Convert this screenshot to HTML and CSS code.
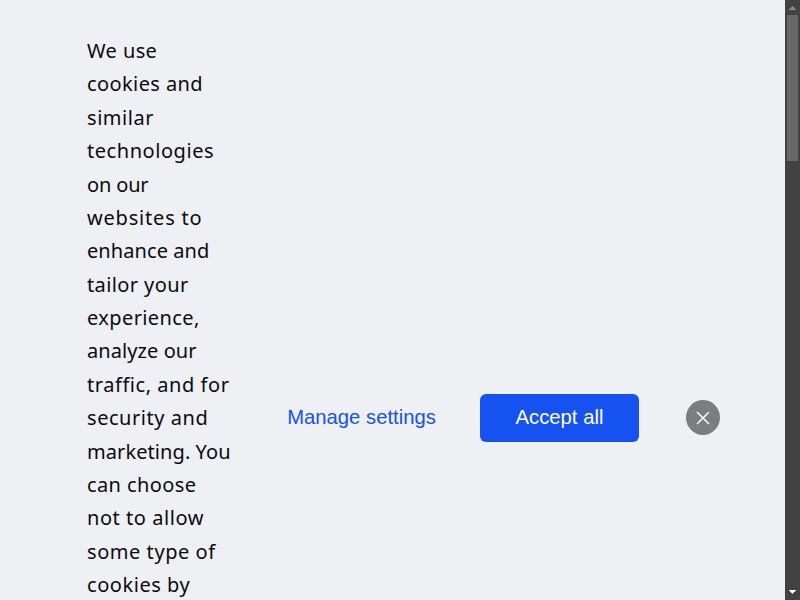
FILE: index.html
```
<!DOCTYPE html>
<html lang="en">
<head>
<meta charset="utf-8">
<title>Cookie settings</title>
<link rel="stylesheet" href="styles.css">
</head>
<body>
<main class="banner">
  <p class="message">
    <span class="loose">We use</span>
    <span class="loose">cookies and</span>
    <span class="wide">similar</span>
    <span class="wide">technologies</span>
    <span class="tight">on our</span>
    <span class="widest">websites to</span>
    <span class="snug">enhance and</span>
    <span class="loose">tailor your</span>
    <span class="loose">experience,</span>
    <span class="snug">analyze our</span>
    <span class="wide">traffic, and for</span>
    <span class="wide">security and</span>
    <span class="snug">marketing. You</span>
    <span class="loose">can choose</span>
    <span class="wide">not to allow</span>
    <span class="wide">some type of</span>
    <span class="wide">cookies by</span>
  </p>
  <div class="actions">
    <button class="manage">Manage settings</button>
    <button class="accept">Accept all</button>
    <button class="close" aria-label="Close"><svg width="14" height="14" viewBox="0 0 14 14"><path d="M1 1L13 13M13 1L1 13"/></svg></button>
  </div>
</main>
<div class="scrollbar">
  <svg class="arrow" width="15" height="15" viewBox="0 0 15 15" shape-rendering="crispEdges"><path fill="#8b8b8b" d="M7 6h1v1h1v1h1v1h1v1H4V9h1V8h1V7h1z"/></svg>
  <div class="thumb"></div>
  <svg class="arrow down" width="15" height="15" viewBox="0 0 15 15" shape-rendering="crispEdges"><path fill="#fff" d="M4 5h7v1h-1v1H9v1H8v1H7V8H6V7H5V6H4z"/></svg>
</div>
</body>
</html>
```
FILE: styles.css
```
* { box-sizing: border-box; }
body {
  margin: 0;
  height: 600px;
  display: flex;
  overflow: hidden;
  background: #eef0f4;
}
.banner {
  flex: 1;
  display: flex;
  padding: 34px 65px 0 87px;
}
.message {
  margin: 0;
  width: 170px;
  flex: none;
  color: #0a0b0d;
  font: 20px/33.37px "Noto Sans", sans-serif;
  white-space: nowrap;
}
.message span { display: block; }
.tight { letter-spacing: -0.15px; }
.snug { letter-spacing: 0.08px; }
.loose { letter-spacing: 0.4px; }
.wide { letter-spacing: 0.55px; }
.widest { letter-spacing: 0.8px; }
.actions {
  flex: 1;
  height: 48px;
  margin-top: 360px;
  display: flex;
  align-items: center;
}
button {
  border: 0;
  padding: 0;
  flex: none;
  font: 20.25px/24px "Liberation Sans", Arial, sans-serif;
  white-space: nowrap;
}
.manage {
  width: 209px;
  padding-bottom: 2px;
  background: none;
  color: #1652f0;
}
.accept {
  width: 159px;
  height: 48px;
  padding-bottom: 2px;
  margin-left: 14px;
  border-radius: 6px;
  background: #1652f0;
  color: #fff;
}
.close {
  display: flex;
  align-items: center;
  justify-content: center;
  width: 34px;
  height: 35px;
  margin: 0 0 1px 47px;
  border-radius: 50%;
  background: #7c7d80;
}
.close path { stroke: #fff; stroke-width: 1.5; fill: none; }
.scrollbar {
  width: 15px;
  flex: none;
  display: flex;
  flex-direction: column;
  background: #424242;
}
.arrow { display: block; flex: none; }
.thumb { height: 146px; margin: 0 2px; background: #686868; }
.down { margin-top: auto; }
```
